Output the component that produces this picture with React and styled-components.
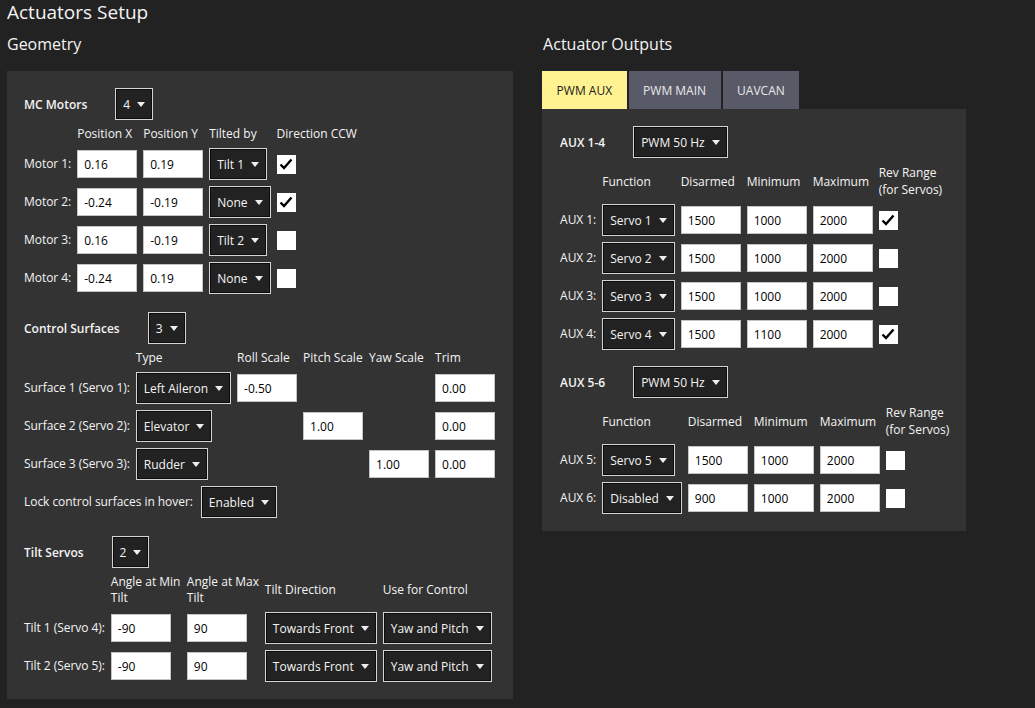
import styled, { createGlobalStyle } from "styled-components";

const GlobalStyle = createGlobalStyle`
  html, body {
    margin: 0;
    background: #222222;
  }
  body {
    font-family: "Open Sans", "Liberation Sans", sans-serif;
    font-size: 12px;
    color: #f4f4f4;
  }
`

const Page = styled.div`
  min-height: 100vh;
  padding: 0 7px;
  box-sizing: border-box;
`

const Title = styled.h1`
  margin: 0;
  font-size: 19px;
  font-weight: 400;
  line-height: 24px;
`

const Columns = styled.div`
  display: flex;
  align-items: flex-start;
  gap: 29px;
  margin-top: 9px;
`

const Column = styled.div`
  display: flex;
  flex-direction: column;
`

const Heading = styled.h2`
  margin: 0 0 16px;
  font-size: 16px;
  font-weight: 400;
  line-height: 22px;
  padding-left: ${p => p.$indent || 0}px;
`

const Panel = styled.div`
  background: #333333;
  padding: 17px 18px 17px 17px;
  display: flex;
  flex-direction: column;
  gap: 18px;
`

const Section = styled.div`
  display: flex;
  flex-direction: column;
  gap: 6px;
`

const SectionHead = styled.div`
  display: flex;
  align-items: center;
  gap: 28px;
`

const Bold = styled.span`
  font-weight: 600;
`

const Grid = styled.div`
  display: grid;
  grid-template-columns: ${p => p.$cols};
  justify-content: start;
  column-gap: 6px;
  row-gap: 6px;
  align-items: center;
  justify-items: start;
`

const Head = styled.div`
  line-height: ${p => p.$lh || 16}px;
  white-space: nowrap;
`

const Label = styled.div`
  white-space: nowrap;
  line-height: 16px;
  letter-spacing: -0.05px;
`

const Combo = styled.div`
  height: 32px;
  box-sizing: border-box;
  display: inline-flex;
  align-items: center;
  gap: 7px;
  padding: 0 7px;
  background: #222222;
  border: 1px solid #d4d4d4;
  box-shadow: inset 0 0 0 1px #0c0c0c;
  color: #f4f4f4;
  white-space: nowrap;
`

const Caret = styled.span`
  width: 0;
  height: 0;
  border-left: 4px solid transparent;
  border-right: 4px solid transparent;
  border-top: 5px solid #eeeeee;
  margin-top: 1px;
`

const Field = styled.div`
  width: 60px;
  height: 28px;
  box-sizing: border-box;
  display: flex;
  align-items: center;
  padding-left: 6px;
  background: #ffffff;
  border: 1px solid #c4c4c4;
  color: #000000;
`

const Box = styled.div`
  width: 19px;
  height: 19px;
  background: #ffffff;
  display: flex;
  align-items: center;
  justify-content: center;
`

const Row = styled.div`
  display: flex;
  align-items: center;
  gap: 8px;
`

const Tabs = styled.div`
  display: flex;
  gap: 2px;
`

const Tab = styled.div`
  height: 38px;
  padding: 0 14.5px;
  display: flex;
  align-items: center;
  background: ${p => (p.$active ? "#fff291" : "#585a68")};
  color: ${p => (p.$active ? "#1a1a1a" : "#e8e8e8")};
`

const OutPanel = styled(Panel)`
  width: 424px;
  box-sizing: border-box;
  gap: 16px;
  padding: 17px 18px;
`

const Select = ({ value }) => (
  <Combo>
    {value}
    <Caret />
  </Combo>
)

const Check = ({ on }) => (
  <Box>
    {on && (
      <svg width="14" height="14" viewBox="0 0 14 14">
        <path d="M1.5 7.5 L5 11 L12.5 2.5" fill="none" stroke="#000" strokeWidth="2.4" />
      </svg>
    )}
  </Box>
)

const motors = [
  ["0.16", "0.19", "Tilt 1", true],
  ["-0.24", "-0.19", "None", true],
  ["0.16", "-0.19", "Tilt 2", false],
  ["-0.24", "0.19", "None", false],
]

const surfaces = [
  ["Left Aileron", 0, "-0.50"],
  ["Elevator", 1, "1.00"],
  ["Rudder", 2, "1.00"],
]

const tilts = [
  ["-90", "90"],
  ["-90", "90"],
]

const aux14 = [
  ["Servo 1", "1500", "1000", "2000", true],
  ["Servo 2", "1500", "1000", "2000", false],
  ["Servo 3", "1500", "1000", "2000", false],
  ["Servo 4", "1500", "1100", "2000", true],
]

const aux56 = [
  ["Servo 5", "1500", "1000", "2000", false],
  ["Disabled", "900", "1000", "2000", false],
]

const OutputGrid = ({ start, rows }) => (
  <Grid $cols="auto auto 60px 60px 60px auto">
    <span />
    <Head $lh={17}>Function</Head>
    <Head $lh={17}>Disarmed</Head>
    <Head $lh={17}>Minimum</Head>
    <Head $lh={17}>Maximum</Head>
    <Head $lh={17}>Rev Range<br />(for Servos)</Head>
    {rows.map((r, i) => [
      <Label key={"l" + i}>AUX {start + i}:</Label>,
      <Select key={"s" + i} value={r[0]} />,
      <Field key={"a" + i}>{r[1]}</Field>,
      <Field key={"b" + i}>{r[2]}</Field>,
      <Field key={"c" + i}>{r[3]}</Field>,
      <Check key={"k" + i} on={r[4]} />,
    ])}
  </Grid>
)

const App = () => {
  return (
    <Page>
      <GlobalStyle />
      <Title>Actuators Setup</Title>
      <Columns>
        <Column>
          <Heading>Geometry</Heading>
          <Panel>
            <Section>
              <SectionHead>
                <Bold>MC Motors</Bold>
                <Select value="4" />
              </SectionHead>
              <Grid $cols="auto 60px 60px auto auto">
                <span />
                <Head>Position X</Head>
                <Head>Position Y</Head>
                <Head>Tilted by</Head>
                <Head>Direction CCW</Head>
                {motors.map((m, i) => [
                  <Label key={"l" + i}>Motor {i + 1}:</Label>,
                  <Field key={"x" + i}>{m[0]}</Field>,
                  <Field key={"y" + i}>{m[1]}</Field>,
                  <Select key={"t" + i} value={m[2]} />,
                  <Check key={"c" + i} on={m[3]} />,
                ])}
              </Grid>
            </Section>

            <Section>
              <SectionHead>
                <Bold>Control Surfaces</Bold>
                <Select value="3" />
              </SectionHead>
              <Grid $cols="auto auto 60px 60px 60px 60px">
                <span />
                <Head>Type</Head>
                <Head>Roll Scale</Head>
                <Head>Pitch Scale</Head>
                <Head>Yaw Scale</Head>
                <Head>Trim</Head>
                {surfaces.map((s, i) => [
                  <Label key={"l" + i}>Surface {i + 1} (Servo {i + 1}):</Label>,
                  <Select key={"t" + i} value={s[0]} />,
                  ...[0, 1, 2].map(k =>
                    k === s[1] ? <Field key={"f" + i + k}>{s[2]}</Field> : <span key={"f" + i + k} />
                  ),
                  <Field key={"r" + i}>0.00</Field>,
                ])}
              </Grid>
              <Row>
                <Label>Lock control surfaces in hover:</Label>
                <Select value="Enabled" />
              </Row>
            </Section>

            <Section>
              <SectionHead>
                <Bold>Tilt Servos</Bold>
                <Select value="2" />
              </SectionHead>
              <Grid $cols="auto 70px 72px auto auto">
                <span />
                <Head>Angle at Min<br />Tilt</Head>
                <Head>Angle at Max<br />Tilt</Head>
                <Head>Tilt Direction</Head>
                <Head>Use for Control</Head>
                {tilts.map((t, i) => [
                  <Label key={"l" + i}>Tilt {i + 1} (Servo {i + 4}):</Label>,
                  <Field key={"a" + i}>{t[0]}</Field>,
                  <Field key={"b" + i}>{t[1]}</Field>,
                  <Select key={"d" + i} value="Towards Front" />,
                  <Select key={"u" + i} value="Yaw and Pitch" />,
                ])}
              </Grid>
            </Section>
          </Panel>
        </Column>

        <Column>
          <Heading $indent={1}>Actuator Outputs</Heading>
          <Tabs>
            <Tab $active>PWM AUX</Tab>
            <Tab>PWM MAIN</Tab>
            <Tab>UAVCAN</Tab>
          </Tabs>
          <OutPanel>
            <Section>
              <SectionHead>
                <Bold>AUX 1-4</Bold>
                <Select value="PWM 50 Hz" />
              </SectionHead>
              <OutputGrid start={1} rows={aux14} />
            </Section>
            <Section>
              <SectionHead>
                <Bold>AUX 5-6</Bold>
                <Select value="PWM 50 Hz" />
              </SectionHead>
              <OutputGrid start={5} rows={aux56} />
            </Section>
          </OutPanel>
        </Column>
      </Columns>
    </Page>
  );
}

export default App;
